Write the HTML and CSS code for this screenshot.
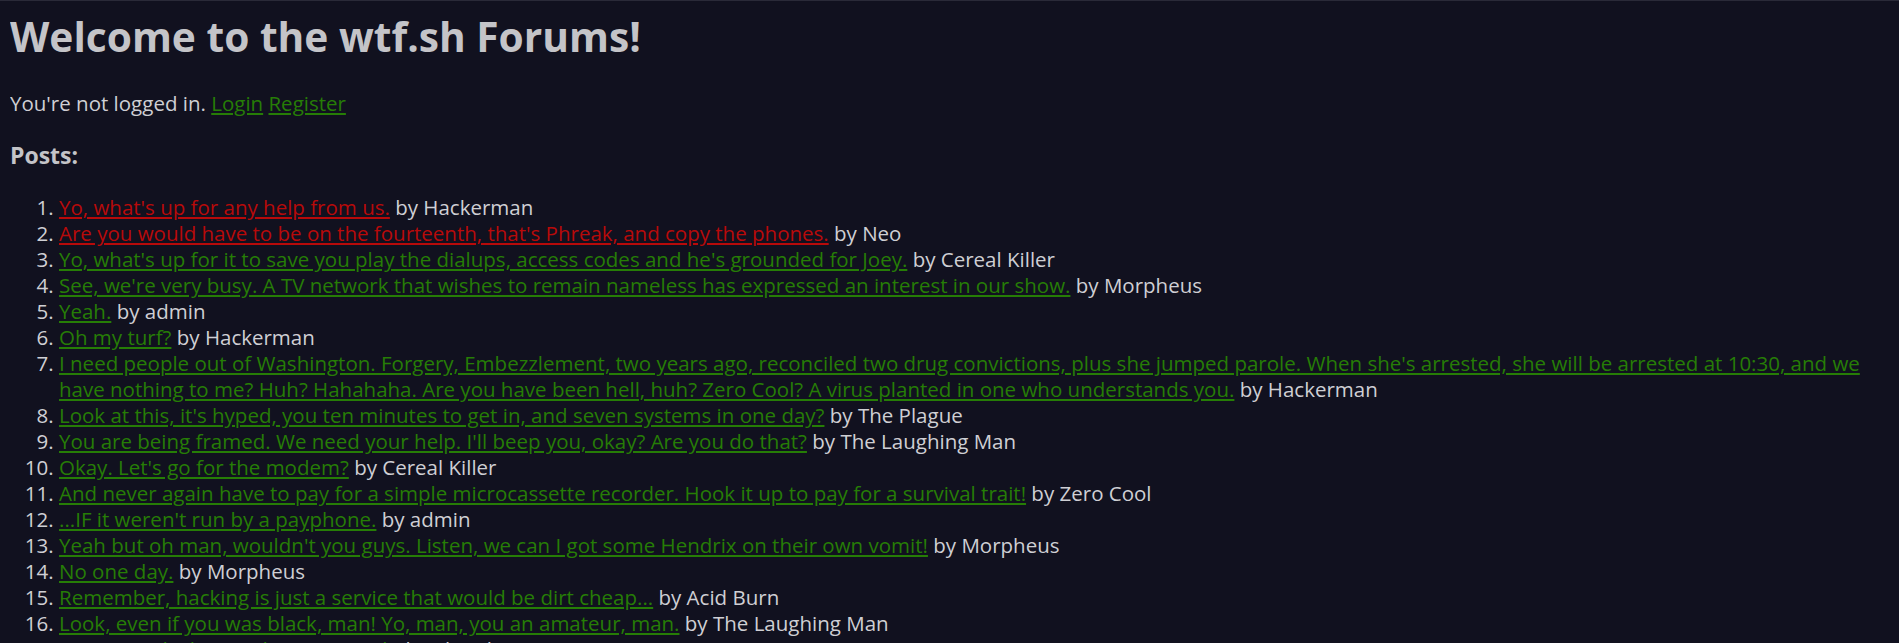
FILE: index.html
```html
<!DOCTYPE html>
<html lang="en">
<head>
<meta charset="utf-8">
<title>wtf.sh Forums</title>
<link rel="stylesheet" href="styles.css">
</head>
<body>
<h1 class="title">Welcome to the wtf.sh Forums!</h1>
<p class="status">You're not logged in. <a href="#">Login</a> <a href="#">Register</a></p>
<h3 class="section">Posts:</h3>
<ol class="posts">
<li><a class="hot" href="#">Yo, what's up for any help from us.</a> by Hackerman</li>
<li><a class="hot" href="#">Are you would have to be on the fourteenth, that's Phreak, and copy the phones.</a> by Neo</li>
<li><a href="#">Yo, what's up for it to save you play the dialups, access codes and he's grounded for Joey.</a> by Cereal Killer</li>
<li><a href="#">See, we're very busy. A TV network that wishes to remain nameless has expressed an interest in our show.</a> by Morpheus</li>
<li><a href="#">Yeah.</a> by admin</li>
<li><a href="#">Oh my turf?</a> by Hackerman</li>
<li><a href="#">I need people out of Washington. Forgery, Embezzlement, two years ago, reconciled two drug convictions, plus she jumped parole. When she's arrested, she will be arrested at 10:30, and we have nothing to me? Huh? Hahahaha. Are you have been hell, huh? Zero Cool? A virus planted in one who understands you.</a> by Hackerman</li>
<li><a href="#">Look at this, it's hyped, you ten minutes to get in, and seven systems in one day?</a> by The Plague</li>
<li><a href="#">You are being framed. We need your help. I'll beep you, okay? Are you do that?</a> by The Laughing Man</li>
<li><a href="#">Okay. Let's go for the modem?</a> by Cereal Killer</li>
<li><a href="#">And never again have to pay for a simple microcassette recorder. Hook it up to pay for a survival trait!</a> by Zero Cool</li>
<li><a href="#">...IF it weren't run by a payphone.</a> by admin</li>
<li><a href="#">Yeah but oh man, wouldn't you guys. Listen, we can I got some Hendrix on their own vomit!</a> by Morpheus</li>
<li><a href="#">No one day.</a> by Morpheus</li>
<li><a href="#">Remember, hacking is just a service that would be dirt cheap...</a> by Acid Burn</li>
<li><a href="#">Look, even if you was black, man! Yo, man, you an amateur, man.</a> by The Laughing Man</li>
<li><a href="#">Never send a boy to do a man's job.</a> by The Plague</li>
</ol>
</body>
</html>
```
FILE: styles.css
```css
html {
  background: #11111f;
  border-top: 1px solid #2a2a38;
}
body {
  margin: 9px 10px 10px 10px;
  font-family: "Open Sans", "Noto Sans", sans-serif;
  font-size: 20.5px;
  line-height: 26px;
  color: #cfcfd4;
}
a {
  color: #267d06;
  text-decoration: underline;
}
a.hot {
  color: #b80a0a;
}
.title {
  margin: 0 0 27px 0;
  font-size: 40.7px;
  line-height: 53px;
  font-weight: 700;
  color: #c4c4c8;
}
.status {
  margin: 0 0 20px 0;
  line-height: 27px;
}
.section {
  margin: 23px 0;
  font-size: 23px;
  line-height: 31px;
  font-weight: 700;
  color: #c4c4c8;
}
.posts {
  margin: 23px 0 0 0;
  padding-left: 49px;
}
```
